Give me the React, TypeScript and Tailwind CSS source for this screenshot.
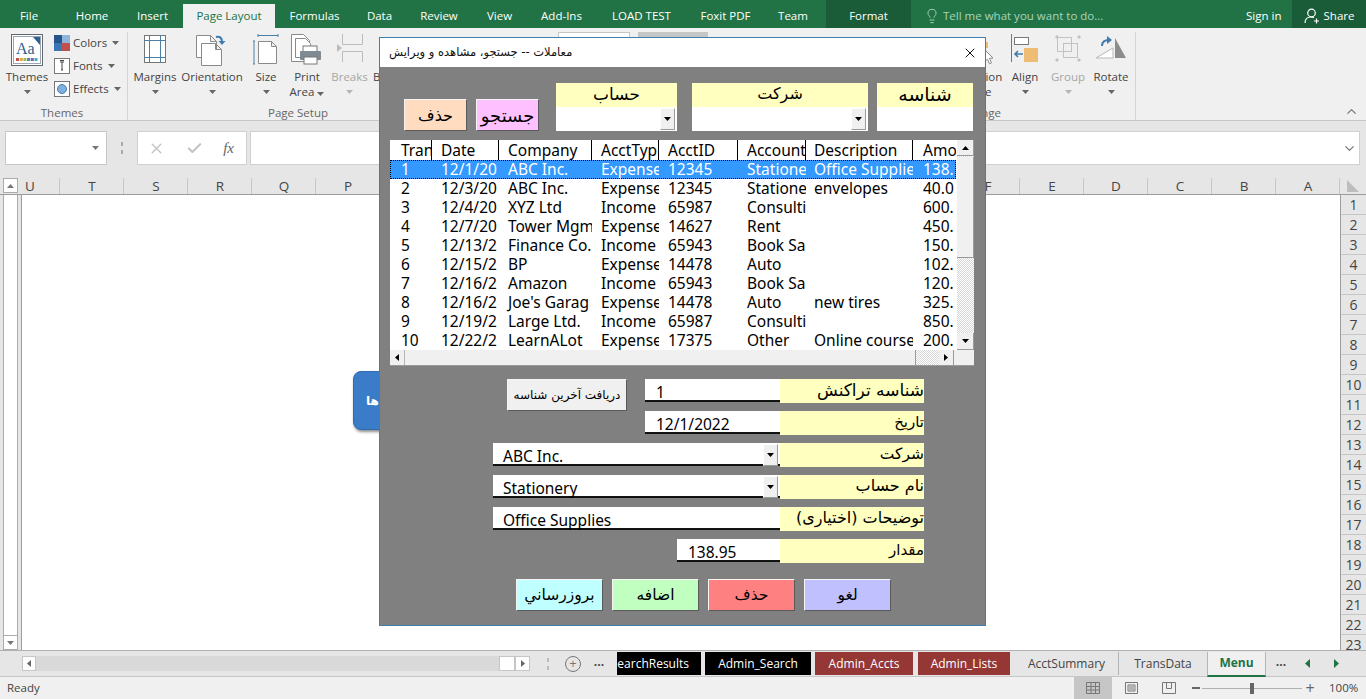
import React from 'react';
import { X, Check, Lightbulb, ChevronUp, ChevronDown } from 'lucide-react';

const TOP_TABS = [
  { label: 'File', cls: 'w-[58px]' },
  { label: 'Home', cls: 'w-[68px]' },
  { label: 'Insert', cls: 'w-[57px] pr-[4px]' },
  { label: 'Page Layout', cls: 'w-[92px] mt-[4px] h-[24px] bg-[#f0f0f0] text-[#217346]' },
  { label: 'Formulas', cls: 'w-[79px]' },
  { label: 'Data', cls: 'w-[51px]' },
  { label: 'Review', cls: 'w-[68px]' },
  { label: 'View', cls: 'w-[53px]' },
  { label: 'Add-Ins', cls: 'w-[71px]' },
  { label: 'LOAD TEST', cls: 'w-[89px]' },
  { label: 'Foxit PDF', cls: 'w-[79px]' },
  { label: 'Team', cls: 'w-[56px]' },
];

const COLUMNS = ['T', 'S', 'R', 'Q', 'P', 'O', 'N', 'M', 'L', 'K', 'J', 'I', 'H', 'G', 'F', 'E', 'D', 'C', 'B', 'A'];
const ROW_NUMBERS = Array.from({ length: 23 }, (_, i) => i + 1);

const LIST_COLS = [
  'w-[41px] pl-[10px]',
  'w-[67px] pl-[9px]',
  'w-[93px] pl-[9px]',
  'w-[67px] pl-[9px]',
  'w-[79px] pl-[9px]',
  'w-[68px] pl-[9px]',
  'w-[107px] pl-[8px]',
  'w-[43px] pl-[10px]',
];

const HEADERS = ['Tran', 'Date', 'Company', 'AcctTyp', 'AcctID', 'Account', 'Description', 'Amo'];

// strings are as the listbox shows them, it clips on whole characters
const ROWS = [
  ['1', '12/1/20', 'ABC Inc.', 'Expense', '12345', 'Statione', 'Office Supplie', '138.'],
  ['2', '12/3/20', 'ABC Inc.', 'Expense', '12345', 'Statione', 'envelopes', '40.0'],
  ['3', '12/4/20', 'XYZ Ltd', 'Income', '65987', 'Consulti', '', '600.'],
  ['4', '12/7/20', 'Tower Mgm', 'Expense', '14627', 'Rent', '', '450.'],
  ['5', '12/13/2', 'Finance Co.', 'Income', '65943', 'Book Sa', '', '150.'],
  ['6', '12/15/2', 'BP', 'Expense', '14478', 'Auto', '', '102.'],
  ['7', '12/16/2', 'Amazon', 'Income', '65943', 'Book Sa', '', '120.'],
  ['8', '12/16/2', "Joe's Garag", 'Expense', '14478', 'Auto', 'new tires', '325.'],
  ['9', '12/19/2', 'Large Ltd.', 'Income', '65987', 'Consulti', '', '850.'],
  ['10', '12/22/2', 'LearnALot', 'Expense', '17375', 'Other', 'Online course', '200.'],
];

const BTN_3D = 'border-[1.5px] border-t-[#f4f4f4] border-l-[#f4f4f4] border-b-[#5a5a5a] border-r-[#5a5a5a]';
const ARABIC = "font-['DejaVu_Sans',sans-serif]";
const DITHER = 'bg-[repeating-conic-gradient(#ffffff_0_25%,#d6d6d6_0_50%)] bg-[length:2px_2px]';

function Caret({ color = '#666666', up }: { color?: string; up?: boolean }) {
  return (
    <svg width="7" height="4" viewBox="0 0 7 4" className="inline-block">
      <path d={up ? 'M0 4h7L3.5 0z' : 'M0 0h7L3.5 4z'} fill={color} />
    </svg>
  );
}

function ThemesIcon() {
  return (
    <svg width="32" height="32" viewBox="0 0 32 32">
      <rect x="0.5" y="0.5" width="31" height="31" fill="#fff" stroke="#5f6a72" />
      <rect x="2.5" y="2.5" width="27" height="27" fill="#fff" stroke="#9aa5ad" />
      <path d="M22 3h7v8z" fill="#2f5f92" />
      <text x="5" y="20" fontSize="16" fontFamily="Liberation Serif, serif" fill="#2f5f92">Aa</text>
      {['#c0504d', '#e6a23c', '#9bbb59', '#4f81bd', '#8064a2', '#4bacc6'].map((c, i) => (
        <rect key={c} x={5 + i * 3.7} y="24" width="3" height="3" fill={c} />
      ))}
    </svg>
  );
}

function MarginsIcon() {
  return (
    <svg width="24" height="30" viewBox="0 0 24 30" fill="none" stroke="#4a7fa8">
      <rect x="1.5" y="1.5" width="21" height="27" fill="#fff" stroke="#777" />
      <path d="M1.5 6.5h21M1.5 23.5h21M6.5 1.5v27M17.5 1.5v27" />
    </svg>
  );
}

function Page({ x, y }: { x: number; y: number }) {
  return (
    <path
      d={`M${x + 0.5} ${y + 0.5}h14l6 6v16h-20z M${x + 14.5} ${y + 0.5}v6h6`}
      fill="#fff"
      stroke="#8a8a8a"
    />
  );
}

function OrientationIcon() {
  return (
    <svg width="32" height="32" viewBox="0 0 32 32">
      <Page x={0} y={1} />
      <Page x={5} y={9} />
      <path d="M20 3c4-1 6 1 6 5" fill="none" stroke="#3f7cae" strokeWidth="2" />
      <path d="M22.5 7h7L26 11z" fill="#3f7cae" />
    </svg>
  );
}

function SizeIcon() {
  return (
    <svg width="26" height="32" viewBox="0 0 26 32">
      <path d="M5 1.5h20M5 0v3M25 0v3M1 7v23M0 7h2M0 30h2" stroke="#4a7fa8" fill="none" />
      <path d="M5.5 7.5h13l5 5v17h-18z M18.5 7.5v5h5" fill="#fff" stroke="#8a8a8a" />
    </svg>
  );
}

function PrintIcon() {
  return (
    <svg width="32" height="32" viewBox="0 0 32 32">
      <path d="M0.5 0.5h12l6 6v21h-18z" fill="#fff" stroke="#8a8a8a" />
      <path d="M4.5 4.5h10l5 5v14h-15z" fill="#fff" stroke="#8a8a8a" />
      <rect x="12" y="12" width="14" height="6" fill="#fff" stroke="#777" />
      <rect x="9" y="17" width="21" height="9" rx="1" fill="#7f8a92" />
      <rect x="13" y="23" width="13" height="7" fill="#fff" stroke="#777" />
    </svg>
  );
}

function BreaksIcon() {
  return (
    <svg width="26" height="28" viewBox="0 0 26 28" fill="none" stroke="#bdbdbd">
      <path d="M5.5 0v10.5h20V0M5.5 28V17.5h20V28" />
      <path d="M0 10v8l5-4z" fill="#bdbdbd" stroke="none" />
    </svg>
  );
}

function AlignIcon() {
  return (
    <svg width="28" height="30" viewBox="0 0 28 30">
      <path d="M0.5 0v28" stroke="#777" />
      <rect x="3.5" y="3.5" width="14" height="7" fill="#fff" stroke="#777" />
      <rect x="13" y="14" width="14" height="14" fill="#eebc75" />
      <path d="M12 20H4M7 17l-3 3 3 3" fill="none" stroke="#3f7cae" strokeWidth="1.6" />
    </svg>
  );
}

function GroupIcon() {
  return (
    <svg width="28" height="30" viewBox="0 0 28 30" fill="none" stroke="#c2c2c2">
      <rect x="3.5" y="3.5" width="14" height="14" />
      <rect x="9.5" y="9.5" width="14" height="14" />
      <path d="M2 2h2v2H2zM24 2h2v2h-2zM2 25h2v2H2zM24 25h2v2h-2z" fill="#c2c2c2" />
    </svg>
  );
}

function RotateIcon() {
  return (
    <svg width="32" height="28" viewBox="0 0 32 28">
      <path d="M1 24 L18 14 V24z" fill="#fff" stroke="#b8b8b8" />
      <path d="M20 24V4l11 20z" fill="#8c8c8c" />
      <path d="M7 12c0-4 3-6 7-6" fill="none" stroke="#3f7cae" strokeWidth="2" />
      <path d="M12 2v8l5-4z" fill="#3f7cae" />
    </svg>
  );
}

function BigItem({
  w,
  icon,
  label,
  label2,
  muted,
  caretInline,
}: {
  w: string;
  icon?: React.ReactNode;
  label: string;
  label2?: string;
  muted?: boolean;
  caretInline?: boolean;
}) {
  return (
    <div className={`${w} flex flex-col items-center shrink-0 whitespace-nowrap ${muted ? 'text-[#a6a6a6]' : ''}`}>
      <div className="h-[34px] flex items-start justify-center">{icon}</div>
      <div className="leading-[15px] mt-[1px] text-center">{label}</div>
      {label2 ? (
        <div className="leading-[15px] text-center">
          {label2}
          {caretInline && (
            <span className="ml-[3px] align-middle">
              <Caret />
            </span>
          )}
        </div>
      ) : (
        <div className="h-[15px] flex items-center">
          <Caret color={muted ? '#b5b5b5' : '#666666'} />
        </div>
      )}
    </div>
  );
}

function SmallItem({ icon, label }: { icon: React.ReactNode; label: string }) {
  return (
    <div className="flex items-center h-[23px] gap-[3px]">
      <div className="w-[16px] h-[16px] flex items-center justify-center">{icon}</div>
      <span>{label}</span>
      <span className="ml-[2px] mb-[1px]">
        <Caret />
      </span>
    </div>
  );
}

function Ribbon() {
  return (
    <div className="h-[93px] bg-[#f0f0f0] border-b border-[#c6c6c6] flex text-[11.5px] text-[#444444] overflow-hidden shrink-0">
      <div className="w-[128px] h-[90px] shrink-0 flex flex-col justify-between border-r border-[#d4d4d4] mt-[4px]">
        <div className="flex pl-[5px] pt-[2px]">
          <BigItem w="w-[44px]" icon={<ThemesIcon />} label="Themes" />
          <div className="ml-[5px] -mt-[3px] flex flex-col">
            <SmallItem
              label="Colors"
              icon={
                <svg width="16" height="16" viewBox="0 0 16 16">
                  <rect width="8" height="8" fill="#27548a" />
                  <rect x="8" width="8" height="8" fill="#8fb4d9" />
                  <rect y="8" width="8" height="8" fill="#3a76b4" />
                  <rect x="8" y="8" width="8" height="8" fill="#c0504d" />
                </svg>
              }
            />
            <SmallItem
              label="Fonts"
              icon={
                <svg width="16" height="16" viewBox="0 0 16 16">
                  <rect x="0.5" y="0.5" width="15" height="15" fill="#fff" stroke="#777" />
                  <path d="M6 4h4M8 4v8M7 12h2M6 2.5h4" stroke="#444" fill="none" />
                </svg>
              }
            />
            <SmallItem
              label="Effects"
              icon={
                <svg width="16" height="16" viewBox="0 0 16 16">
                  <rect x="0.5" y="0.5" width="15" height="15" fill="#fff" stroke="#777" />
                  <circle cx="8" cy="8" r="4.5" fill="#7fb0e0" stroke="#4a7fa8" />
                </svg>
              }
            />
          </div>
        </div>
        <div className="h-[18px] leading-[18px] text-center text-[#666666] pr-[3px]">Themes</div>
      </div>

      <div className="w-[340px] h-[90px] shrink-0 flex flex-col justify-between mt-[4px]">
        <div className="flex pl-[2px] pt-[2px]">
          <BigItem w="w-[50px]" icon={<MarginsIcon />} label="Margins" />
          <BigItem w="w-[64px]" icon={<OrientationIcon />} label="Orientation" />
          <BigItem w="w-[44px]" icon={<SizeIcon />} label="Size" />
          <BigItem w="w-[38px]" icon={<PrintIcon />} label="Print" label2="Area" caretInline />
          <BigItem w="w-[47px]" icon={<BreaksIcon />} label="Breaks" muted />
          <div className="w-[20px] pt-[35px] leading-[15px] whitespace-nowrap">Background</div>
        </div>
        <div className="h-[18px] leading-[18px] text-center text-[#666666]">Page Setup</div>
      </div>

      <div className="w-[356px] shrink-0 flex gap-[8px] pl-[90px] pt-[4px]">
        <div className="w-[72px] h-[12px] bg-white border border-[#c6c6c6]" />
        <div className="w-[70px] h-[12px] bg-[#c6c6c6]" />
      </div>

      <div className="w-[312px] h-[90px] shrink-0 flex flex-col justify-between border-r border-[#d4d4d4] mt-[4px]">
        <div className="flex justify-end pr-[4px] pt-[2px]">
          <BigItem
            w="w-[50px]"
            label="Selection"
            label2="Pane"
            icon={
              <svg width="50" height="32" viewBox="0 0 50 32" fill="none">
                <rect x="29" y="8" width="6" height="6" fill="#eebc75" />
                <path d="M32 16l8 8-3.5.3 2 4.5-2 1-2-4.6-2.500 2.300z" fill="#fff" stroke="#8a8a8a" />
              </svg>
            }
          />
          <div className="w-[2px]" />
          <BigItem w="w-[40px]" icon={<AlignIcon />} label="Align" />
          <div className="w-[3px]" />
          <BigItem w="w-[40px]" icon={<GroupIcon />} label="Group" muted />
          <div className="w-[3px]" />
          <BigItem w="w-[40px]" icon={<RotateIcon />} label="Rotate" />
        </div>
        <div className="h-[18px] leading-[18px] text-center text-[#666666]">Arrange</div>
      </div>

      <div className="flex-1 flex items-end justify-end pr-[7px] pb-[1px]">
        <ChevronUp size={15} strokeWidth={2} className="text-[#777777]" />
      </div>
    </div>
  );
}

function FormulaBar() {
  return (
    <div className="h-[57px] bg-[#e6e6e6] flex items-start pt-[10px] pl-[5px] pr-[6px] shrink-0">
      <div className="w-[102px] h-[34px] bg-white border border-[#c6c6c6] flex items-center justify-end pr-[7px]">
        <Caret color="#777777" />
      </div>
      <div className="w-[30px] h-[34px] flex items-center justify-center">
        <div className="w-[2px] h-[12px] border-y-[4px] border-[#aaaaaa]" />
      </div>
      <div className="w-[110px] h-[34px] bg-white border border-[#d0d0d0] flex items-center justify-between pl-[10px] pr-[12px] text-[#c4c4c4]">
        <X size={17} strokeWidth={2} />
        <Check size={17} strokeWidth={3} />
        <span className="text-[#666666] italic font-['Liberation_Serif',serif] text-[15px]">fx</span>
      </div>
      <div className="flex-1 h-[34px] ml-[3px] bg-white border border-[#d0d0d0] flex items-center justify-end pr-[2px] text-[#777777]">
        <ChevronDown size={15} strokeWidth={2} />
      </div>
    </div>
  );
}

function ColumnHeaders() {
  return (
    <div className="h-[17px] bg-[#e6e6e6] flex text-[13.5px] text-[#444444] leading-[16px] border-b border-[#9c9c9c] shrink-0">
      <div className="w-[21px] shrink-0 flex">
        <div className="ml-[3px] w-[15px] h-[15px] bg-white border border-[#ababab] flex items-center justify-center">
          <Caret color="#777777" up />
        </div>
      </div>
      <div className="w-[39px] shrink-0 pl-[4px] border-r border-[#c6c6c6]">U</div>
      {COLUMNS.map((c) => (
        <div key={c} className="w-[64px] shrink-0 text-center pl-[1px] border-r border-[#c6c6c6]">
          {c}
        </div>
      ))}
      <div className="flex-1 flex justify-center items-center">
        <svg width="12" height="12" viewBox="0 0 12 12">
          <path d="M0 0l12 12H0z" fill="#bdbdbd" />
        </svg>
      </div>
    </div>
  );
}

function SheetArea() {
  return (
    <div className="h-[455px] flex bg-[#e6e6e6] overflow-hidden shrink-0">
      <div className="w-[21px] shrink-0 flex flex-col">
        <div className="ml-[3px] w-[15px] flex-1 bg-white border-x border-[#ababab]" />
        <div className="ml-[3px] w-[15px] h-[15px] bg-white border border-[#ababab] flex items-center justify-center">
          <Caret color="#777777" />
        </div>
      </div>
      <div className="w-[1319px] shrink-0 bg-white border-l border-[#9c9c9c] relative">
        <div className="absolute left-[331px] top-[176px] w-[60px] h-[59px] rounded-[8px] bg-[#3b7cc8] border border-[#2f6cb0] shadow-[1px_2px_3px_rgba(0,0,0,0.45)] flex items-center pl-[12px]">
          <span className={`${ARABIC} text-white text-[12px] font-bold`}>ها</span>
        </div>
      </div>
      <div className="flex-1 flex flex-col text-[14px] text-[#444444] border-l border-[#9c9c9c]">
        {ROW_NUMBERS.map((n) => (
          <div key={n} className="h-[20px] shrink-0 text-center leading-[20px] border-b border-[#c6c6c6]">
            {n}
          </div>
        ))}
      </div>
    </div>
  );
}

function SheetTab({ label, cls }: { label: string; cls: string }) {
  return <div className={`h-[23px] flex items-center justify-center shrink-0 overflow-hidden ${cls}`}>{label}</div>;
}

function BottomBar() {
  return (
    <div className="h-[27px] bg-[#e6e6e6] border-t border-[#b0b0b0] border-b border-b-[#c6c6c6] flex items-center text-[12px] text-[#444444] shrink-0">
      <div className="w-[22px] shrink-0" />
      <div className="w-[14px] h-[15px] bg-white border border-[#c6c6c6] flex items-center justify-center shrink-0">
        <svg width="4" height="7" viewBox="0 0 4 7"><path d="M4 0v7L0 3.5z" fill="#666" /></svg>
      </div>
      <div className="w-[463px] h-[15px] bg-[#d9d9d9] shrink-0" />
      <div className="w-[16px] h-[15px] bg-white border border-[#c6c6c6] shrink-0" />
      <div className="w-[15px] h-[15px] bg-white border border-[#c6c6c6] flex items-center justify-center shrink-0">
        <svg width="4" height="7" viewBox="0 0 4 7"><path d="M0 0v7l4-3.5z" fill="#666" /></svg>
      </div>
      <div className="w-[35px] shrink-0 flex justify-center">
        <div className="w-[2px] h-[12px] border-y-[4px] border-[#bbbbbb]" />
      </div>
      <div className="w-[16px] h-[16px] rounded-full border border-[#777777] text-[#777777] flex items-center justify-center text-[13px] leading-none shrink-0">
        +
      </div>
      <div className="w-[36px] text-center font-bold shrink-0 -mt-[3px]">...</div>
      <div className="w-[84px] h-[23px] bg-black text-white flex items-center justify-end pr-[12px] overflow-hidden shrink-0 whitespace-nowrap">
        earchResults
      </div>
      <SheetTab label="Admin_Search" cls="w-[106px] ml-[4px] bg-black text-white" />
      <SheetTab label="Admin_Accts" cls="w-[98px] ml-[4px] bg-[#953735] text-white" />
      <SheetTab label="Admin_Lists" cls="w-[92px] ml-[5px] bg-[#953735] text-white" />
      <SheetTab label="AcctSummary" cls="w-[109px] pl-[5px] border-r border-[#b5b5b5]" />
      <SheetTab label="TransData" cls="w-[88px]" />
      <div className="w-[59px] h-[25px] bg-[#f0f0f0] border-x border-[#b5b5b5] border-b-2 border-b-[#217346] text-[#217346] font-bold flex items-center justify-center shrink-0 mt-[1px]">
        Menu
      </div>
      <div className="w-[30px] text-center font-bold shrink-0 -mt-[3px]">...</div>
      <div className="w-[23px] flex justify-center shrink-0">
        <svg width="5" height="9" viewBox="0 0 5 9"><path d="M5 0v9L0 4.5z" fill="#217346" /></svg>
      </div>
      <div className="w-[34px] flex justify-center shrink-0">
        <svg width="5" height="9" viewBox="0 0 5 9"><path d="M0 0v9l5-4.5z" fill="#217346" /></svg>
      </div>
    </div>
  );
}

function StatusBar() {
  return (
    <div className="h-[22px] bg-[#f0f0f0] flex items-center text-[11.5px] text-[#444444] shrink-0">
      <div className="w-[1074px] pl-[7px] shrink-0">Ready</div>
      <div className="w-[38px] h-[22px] bg-[#c6c6c6] flex items-center justify-center shrink-0">
        <svg width="14" height="12" viewBox="0 0 14 12" fill="none" stroke="#777">
          <path d="M.5.5h13v11H.5zM.5 4.500h13M.5 8h13M5 .5v11M9.500.5v11" />
        </svg>
      </div>
      <div className="w-[38px] flex justify-center shrink-0">
        <svg width="13" height="12" viewBox="0 0 13 12" fill="none" stroke="#777">
          <path d="M.5.5h12v11H.5zM3 3h7v6H3zM4 5h5M4 7h5" />
        </svg>
      </div>
      <div className="w-[37px] flex justify-center shrink-0">
        <svg width="14" height="12" viewBox="0 0 14 12" fill="none" stroke="#777">
          <path d="M.5.5h13v11H.5zM4.500.5v6h5v-6" />
        </svg>
      </div>
      <div className="w-[8px] h-[2px] ml-[5px] bg-[#666666] shrink-0" />
      <div className="w-[100px] ml-[2px] h-[1px] bg-[#b0b0b0] flex items-center justify-center shrink-0">
        <div className="w-[4px] h-[11px] bg-[#666666]" />
      </div>
      <div className="w-[14px] text-center text-[16px] leading-none text-[#666666] ml-[1px] shrink-0">+</div>
      <div className="ml-[12px] shrink-0">100%</div>
    </div>
  );
}

function ArrowButton({ up, cls = '' }: { up?: boolean; cls?: string }) {
  return (
    <div className={`bg-[#f0f0f0] flex items-center justify-center shrink-0 border-b border-r border-[#9a9a9a] ${cls}`}>
      <Caret color="#000000" up={up} />
    </div>
  );
}

function ComboButton() {
  return <ArrowButton cls="w-[15px] h-[22px] mr-[2px] mt-[1px] border-l border-t border-l-white border-t-white" />;
}

function Transactions() {
  return (
    <div className="w-[584px] h-[226px] mt-[9px] ml-[10px] bg-white flex flex-col font-['Noto_Sans',sans-serif] text-[15.5px] text-black shrink-0">
      <div className="flex h-[210px]">
        <div className="w-[566px] overflow-hidden">
          <div className="flex h-[20px] leading-[20px] pl-[1px]">
            {HEADERS.map((h, i) => (
              <div key={h} className={`${LIST_COLS[i]} shrink-0 overflow-hidden whitespace-nowrap border-r border-black last:border-r-0`}>
                {h}
              </div>
            ))}
          </div>
          {ROWS.map((r, idx) => (
            <div
              key={r[0]}
              className={`flex h-[19px] leading-[18px] pl-[1px] ${idx === 0 ? 'bg-[#3399ff] text-white outline-1 -outline-offset-1 outline-dotted outline-black' : ''}`}
            >
              {r.map((cell, i) => (
                <div key={i} className={`${LIST_COLS[i]} shrink-0 overflow-hidden whitespace-nowrap`}>
                  {cell}
                </div>
              ))}
            </div>
          ))}
        </div>
        <div className={`w-[17px] ml-[1px] flex flex-col ${DITHER}`}>
          <ArrowButton up cls="h-[16px]" />
          <div className="h-[101px] bg-[#f0f0f0] border-b border-r border-[#9a9a9a] mt-[1px]" />
          <div className="flex-1" />
          <ArrowButton cls="h-[17px]" />
        </div>
      </div>
      <div className="h-[16px] flex bg-[#f0f0f0] border-b border-[#9a9a9a]">
        <div className="w-[15px] flex items-center justify-center border-r border-[#b5b5b5]">
          <svg width="4" height="7" viewBox="0 0 4 7"><path d="M4 0v7L0 3.5z" fill="#000" /></svg>
        </div>
        <div className="w-[511px] border-r border-[#9a9a9a]" />
        <div className={`w-[23px] ${DITHER}`} />
        <div className="w-[15px] flex items-center justify-center border-r border-[#9a9a9a]">
          <svg width="4" height="7" viewBox="0 0 4 7"><path d="M0 0v7l4-3.5z" fill="#000" /></svg>
        </div>
        <div className="flex-1" />
      </div>
    </div>
  );
}

function FilterRow() {
  return (
    <div className={`flex items-end h-[48px] mt-[16px] pl-[24px] text-[16px] text-black shrink-0 ${ARABIC}`}>
      <div className={`w-[63px] h-[32px] pt-[2px] bg-[#ffdcc0] ${BTN_3D} flex items-center justify-center`}>حذف</div>
      <div className={`w-[63px] h-[32px] ml-[9px] bg-[#ffc0ff] ${BTN_3D} flex items-center justify-center text-[18px]`}>جستجو</div>
      <div className="w-[121px] ml-[17px]">
        <div className="h-[24px] bg-[#ffffc0] text-center leading-[22px] text-[17px]">حساب</div>
        <div className="h-[24px] bg-white flex justify-end items-start">
          <ComboButton />
        </div>
      </div>
      <div className="w-[176px] ml-[15px]">
        <div className="h-[24px] bg-[#ffffc0] text-center leading-[22px] text-[16px]">شرکت</div>
        <div className="h-[24px] bg-white flex justify-end items-start">
          <ComboButton />
        </div>
      </div>
      <div className="w-[96px] ml-[9px]">
        <div className="h-[24px] bg-[#ffffc0] text-center leading-[22px] text-[19px]">شناسه</div>
        <div className="h-[24px] bg-white" />
      </div>
    </div>
  );
}

function FieldLabel({ text, size }: { text: string; size: string }) {
  return (
    <div className={`w-[144px] h-[24px] bg-[#ffffc0] text-right leading-[22px] shrink-0 text-black ${size} ${ARABIC}`}>{text}</div>
  );
}

function FieldInput({ value, w, pl, combo }: { value: string; w: string; pl: string; combo?: boolean }) {
  return (
    <div className={`${w} h-[23px] bg-white border-b-2 border-[#111111] flex shrink-0 justify-between ${pl}`}>
      <span className="leading-[27px] whitespace-nowrap">{value}</span>
      {combo && <ComboButton />}
    </div>
  );
}

function Form() {
  return (
    <div className="mt-[13px] pr-[61px] flex flex-col gap-[8px] items-end font-['Noto_Sans',sans-serif] text-[15.5px] text-black shrink-0">
      <div className="flex h-[24px] items-start">
        <div className={`w-[120px] h-[32px] mr-[18px] bg-[#f0f0f0] ${BTN_3D} flex items-center justify-center text-[12px] ${ARABIC}`}>
          دریافت آخرین شناسه
        </div>
        <FieldInput value="1" w="w-[135px]" pl="pl-[11px]" />
        <FieldLabel text="شناسه تراکنش" size="text-[17px]" />
      </div>
      <div className="flex h-[24px] items-start">
        <FieldInput value="12/1/2022" w="w-[135px]" pl="pl-[11px]" />
        <FieldLabel text="تاریخ" size="text-[15px]" />
      </div>
      <div className="flex h-[24px] items-start">
        <FieldInput value="ABC Inc." w="w-[287px]" pl="pl-[10px]" combo />
        <FieldLabel text="شرکت" size="text-[15.5px]" />
      </div>
      <div className="flex h-[24px] items-start">
        <FieldInput value="Stationery" w="w-[287px]" pl="pl-[10px]" combo />
        <FieldLabel text="نام حساب" size="text-[16px]" />
      </div>
      <div className="flex h-[24px] items-start">
        <FieldInput value="Office Supplies" w="w-[287px]" pl="pl-[10px]" />
        <FieldLabel text="توضیحات (اختیاری)" size="text-[16px]" />
      </div>
      <div className="flex h-[24px] items-start">
        <FieldInput value="138.95" w="w-[103px]" pl="pl-[11px]" />
        <FieldLabel text="مقدار" size="text-[15px]" />
      </div>
    </div>
  );
}

function Dialog() {
  const actions = [
    { label: 'بروزرساني', cls: 'bg-[#c0ffff]' },
    { label: 'اضافه', cls: 'bg-[#c0ffc0]' },
    { label: 'حذف', cls: 'bg-[#ff8080]' },
    { label: 'لغو', cls: 'bg-[#c0c0ff]' },
  ];
  return (
    <div className="absolute left-[379px] top-[37px] w-[607px] h-[589px] border border-[#3f7fae] bg-[#808080] flex flex-col">
      <div className={`h-[29px] bg-white flex items-center justify-between pl-[9px] pr-[7px] shrink-0 text-[11.5px] text-[#111111] ${ARABIC}`}>
        <span dir="rtl">معاملات -- جستجو، مشاهده و ویرایش</span>
        <X size={16} strokeWidth={1.4} className="text-black" />
      </div>
      <FilterRow />
      <Transactions />
      <Form />
      <div className={`flex gap-[9px] mt-[16px] pl-[136px] text-[15.5px] text-black ${ARABIC}`}>
        {actions.map((a) => (
          <div key={a.cls} className={`w-[87px] h-[32px] pt-[2px] ${a.cls} ${BTN_3D} flex items-center justify-center`}>
            {a.label}
          </div>
        ))}
      </div>
    </div>
  );
}

export default function App() {
  return (
    <div className="w-[1366px] h-[699px] relative overflow-hidden flex flex-col font-['Open_Sans',sans-serif]">
      <div className="h-[28px] bg-[#217346] flex text-[11.5px] text-white shrink-0">
        {TOP_TABS.map((t) => (
          <div key={t.label} className={`flex items-center justify-center shrink-0 ${t.label === 'Page Layout' ? '' : 'pt-[3px]'} ${t.cls}`}>
            {t.label}
          </div>
        ))}
        <div className="w-[5px] shrink-0" />
        <div className="w-[85px] bg-[#1a5c38] flex items-center justify-center shrink-0 pt-[3px]">Format</div>
        <div className="flex-1 flex items-center pl-[13px] pt-[3px] text-[#a9d3bb]">
          <Lightbulb size={16} strokeWidth={1.4} />
          <span className="ml-[3px]">Tell me what you want to do...</span>
        </div>
        <div className="w-[46px] flex items-center shrink-0 pt-[3px]">Sign in</div>
        <div className="w-[74px] bg-[#1a5c38] flex items-center justify-center gap-[4px] shrink-0 pt-[3px]">
          <svg width="16" height="16" viewBox="0 0 16 16" fill="none" stroke="#fff" strokeWidth="1.2">
            <circle cx="7.5" cy="5" r="3.8" />
            <path d="M1 15c0-4 2.500-6 6-6 1.200 0 2 .2 3 .7M10 13h5M12.500 10.500v5" />
          </svg>
          Share
        </div>
      </div>
      <Ribbon />
      <FormulaBar />
      <ColumnHeaders />
      <SheetArea />
      <BottomBar />
      <StatusBar />
      <Dialog />
    </div>
  );
}
